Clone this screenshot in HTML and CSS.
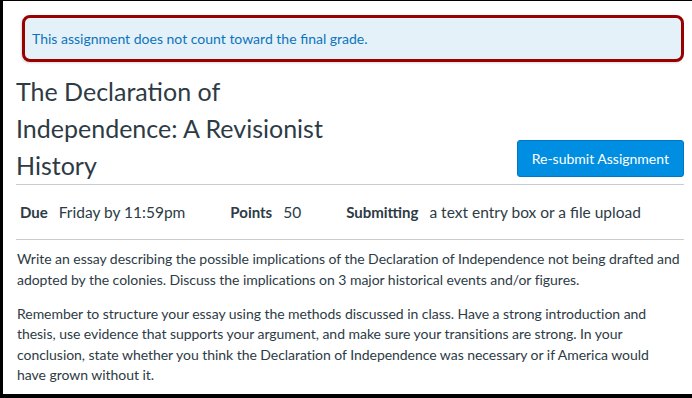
FILE: index.html
```html
<!DOCTYPE html>
<html lang="en">
<head>
  <meta charset="UTF-8" />
  <title>The Declaration of Independence: A Revisionist History</title>
  <link rel="stylesheet" href="styles.css">
</head>
<body>
  <div class="frame">
    <div class="notice">
      This assignment does not count toward the final grade.
    </div>

    <div class="header">
      <h1 class="title">The Declaration of Independence: A Revisionist History</h1>
      <button class="btn">Re-submit Assignment</button>
    </div>

    <div class="details">
      <div class="item"><b>Due</b> Friday by 11:59pm</div>
      <div class="item"><b>Points</b> 50</div>
      <div class="item"><b>Submitting</b> a text entry box or a file upload</div>
    </div>

    <div class="description">
      <p>Write an essay describing the possible implications of the Declaration of Independence not being drafted and adopted by the colonies. Discuss the implications on 3 major historical events and/or figures.</p>
      <p class="last">Remember to structure your essay using the methods discussed in class. Have a strong introduction and thesis, use evidence that supports your argument, and make sure your transitions are strong. In your conclusion, state whether you think the Declaration of Independence was necessary or if America would have grown without it.</p>
    </div>
  </div>
</body>
</html>
```

FILE: styles.css
```css
* {
  box-sizing: border-box;
  margin: 0;
  padding: 0;
}
body {
  font-family: Lato, 'Open Sans', sans-serif;
  background: #fff;
  color: #2d3b45;
}
.frame {
  height: 398px;
  border-top: 1px solid #000;
  border-left: 3px solid #000;
  border-bottom: 4px solid #000;
  padding: 14px 8px 0 13px;
  overflow: hidden;
}
.notice {
  margin-left: 6px;
  height: 47px;
  border: 3px solid #990000;
  border-radius: 8px;
  background: #e5f1f8;
  color: #0b74be;
  font-size: 14px;
  padding: 0 0 0 7px;
  display: flex;
  align-items: center;
  box-shadow: -1px 1px 2px rgba(0, 0, 0, 0.15);
}
.header {
  display: flex;
  justify-content: space-between;
  align-items: flex-end;
  margin-top: 11px;
  border-bottom: 1px solid #c7cdd1;
}
.title {
  width: 330px;
  font-size: 25px;
  font-weight: normal;
  line-height: 37px;
  color: #2d3b45;
}
.btn {
  background: #008ee2;
  color: #fff;
  border: 1px solid #0077c2;
  border-radius: 3px;
  font-family: inherit;
  font-size: 14px;
  padding: 0 14px;
  height: 37px;
  margin-bottom: 7px;
}
.details {
  display: flex;
  height: 55px;
  align-items: center;
  padding-left: 4px;
  font-size: 15.5px;
  white-space: nowrap;
  border-bottom: 1px solid #c7cdd1;
}
.item {
  margin-right: 45px;
}
.item b {
  font-size: 15px;
  margin-right: 7px;
}
.description {
  padding: 9px 0 0 1px;
  font-size: 14px;
  line-height: 20.5px;
  letter-spacing: -0.04px;
}
.description p {
  margin-bottom: 13.5px;
}
.description p.last {
  padding-right: 6px;
}
```
